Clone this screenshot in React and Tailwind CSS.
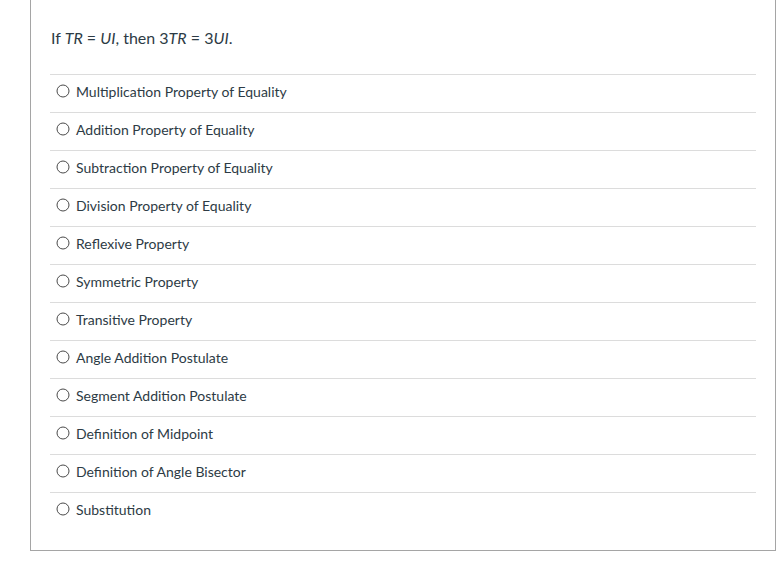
import React from 'react';

const OPTIONS = [
  'Multiplication Property of Equality',
  'Addition Property of Equality',
  'Subtraction Property of Equality',
  'Division Property of Equality',
  'Reflexive Property',
  'Symmetric Property',
  'Transitive Property',
  'Angle Addition Postulate',
  'Segment Addition Postulate',
  'Definition of Midpoint',
  'Definition of Angle Bisector',
  'Substitution',
];

function Radio() {
  return (
    <svg width="14" height="14" viewBox="0 0 14 14" className="shrink-0">
      <circle cx="7" cy="7" r="6" fill="white" stroke="#4a4a4a" strokeWidth="1" />
    </svg>
  );
}

export default function App() {
  return (
    <div className="w-[783px] h-[565px] bg-white font-['Lato','Noto_Sans',sans-serif] text-[#2d3b45]">
      <div className="ml-[30px] w-[746px] h-[551px] border-l border-r border-b border-[#a5a5a5]">
        <div className="pl-[20px] pt-[26px] text-[16px] leading-[24px]">
          If <i>TR</i> = <i>UI</i>, then 3<i>TR</i> = 3<i>UI</i>.
        </div>
        <ul className="mx-[19px] mt-[24px]">
          {OPTIONS.map(o => (
            <li key={o} className="h-[38px] border-t border-[#dcdcdc] flex items-center gap-[6px] pl-[6px] pb-[5px] text-[14px]">
              <Radio />
              <span>{o}</span>
            </li>
          ))}
        </ul>
      </div>
    </div>
  );
}
